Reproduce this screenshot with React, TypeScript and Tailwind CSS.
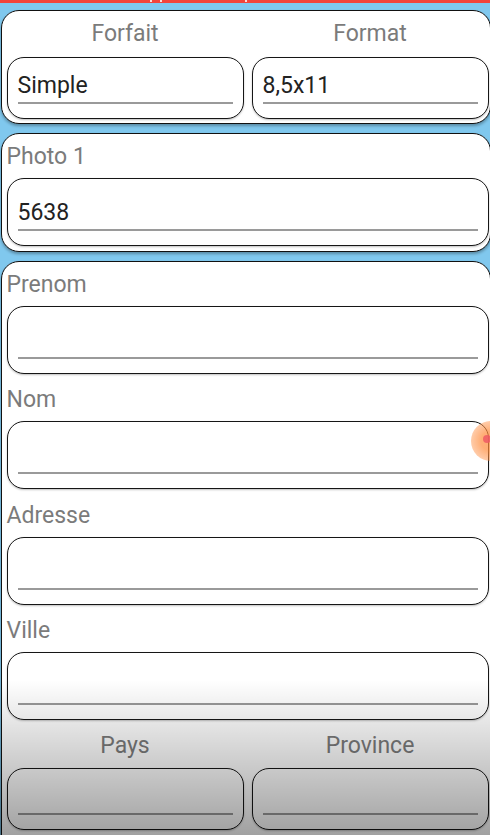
import React from "react";

type FieldProps = {
  value?: string;
  half?: boolean;
};

const Input = ({ value = "", half = false }: FieldProps) => (
  <div
    className={
      "rounded-[17px] border-[1.5px] border-[#161616] bg-white px-[10px] shadow-[0_1px_2px_rgba(0,0,0,0.25)] " +
      (half ? "h-[62px] pt-[15px]" : "h-[68px] pt-[21px]")
    }
  >
    <div className="relative top-px h-6 whitespace-nowrap text-[23px] leading-6 text-[#222]">{value}</div>
    <div className="mt-[5px] h-[2px] bg-[#9a9a9a]" />
  </div>
);

const Label = ({ children, center = false }: { children: React.ReactNode; center?: boolean }) => (
  <div className={"relative top-px h-6 whitespace-nowrap text-[23px] leading-6 text-[#7b7b7b] " + (center ? "text-center" : "")}>
    {children}
  </div>
);

const Card = ({ className = "", children }: { className?: string; children: React.ReactNode }) => (
  <div
    className={
      "ml-px w-[490px] shrink-0 rounded-[18px] border-[1.5px] border-[#111] bg-white pl-[4.5px] pr-[1.5px] shadow-[0_2px_3px_rgba(0,0,0,0.3)] " +
      className
    }
  >
    {children}
  </div>
);

export default function App() {
  const fields = ["Prenom", "Nom", "Adresse", "Ville"];

  return (
    <div className="relative h-[835px] w-[490px] overflow-hidden bg-[#80c8ee] font-['Roboto',sans-serif]">
      {/* status strip */}
      <div className="relative h-[3px] bg-[#f3443a]">
        <span className="absolute left-[150px] top-0 h-[2px] w-[2px] bg-white/80" />
        <span className="absolute left-[160px] top-0 h-[2px] w-[2px] bg-white/80" />
        <span className="absolute left-[245px] top-0 h-[2px] w-[2px] bg-white/80" />
      </div>

      <div className="flex w-[600px] flex-col items-start gap-[9px] pt-[7px]">
        {/* Forfait / Format */}
        <Card className="h-[114px] pt-[9.5px]">
          <div className="grid grid-cols-2 gap-2">
            <Label center>Forfait</Label>
            <Label center>Format</Label>
          </div>
          <div className="mt-3 grid grid-cols-2 gap-2">
            <Input half value="Simple" />
            <Input half value="8,5x11" />
          </div>
        </Card>

        {/* Photo */}
        <Card className="h-[119px] pt-[9.5px]">
          <Label>Photo 1</Label>
          <div className="mt-[10px]">
            <Input value="5638" />
          </div>
        </Card>

        {/* Adresse */}
        <Card className="h-[600px] pt-[9.5px]">
          {fields.map((f, i) => (
            <div key={f} className={i > 0 ? "mt-[13.5px]" : ""}>
              <Label>{f}</Label>
              <div className="mt-[10px]">
                <Input />
              </div>
            </div>
          ))}
          <div className="mt-[13px] grid grid-cols-2 gap-2">
            <Label center>Pays</Label>
            <Label center>Province</Label>
          </div>
          <div className="mt-[11px] grid grid-cols-2 gap-2">
            <Input half />
            <Input half />
          </div>
        </Card>
      </div>

      {/* bottom fade */}
      <div className="pointer-events-none absolute inset-x-0 bottom-0 h-[155px] bg-gradient-to-b from-transparent to-black/[0.37]" />

      {/* touch indicator */}
      <div className="pointer-events-none absolute left-[471px] top-[421px] h-[40px] w-[40px] rounded-full bg-[radial-gradient(circle,rgba(255,140,60,0.7)_35%,rgba(255,150,80,0.45)_75%,rgba(255,170,110,0.15)_100%)]" />
      <div className="pointer-events-none absolute left-[483px] top-[435px] h-[8px] w-[8px] rounded-full bg-[#ef5a64]/85" />
    </div>
  );
}
